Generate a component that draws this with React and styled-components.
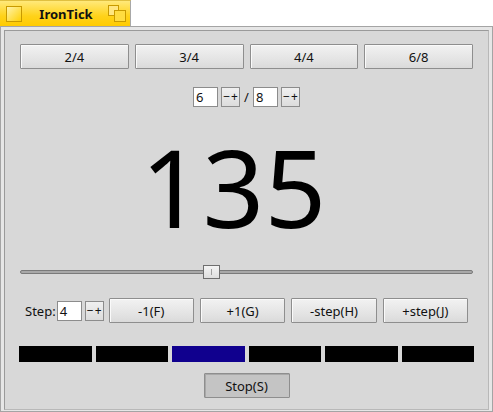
import React from 'react'
import styled, { createGlobalStyle } from 'styled-components'

const GlobalStyle = createGlobalStyle`
    html, body {
        margin: 0;
        padding: 0;
        background: #ffffff;
    }
    body {
        width: 493px;
        height: 412px;
        overflow: hidden;
        font-family: "Noto Sans", "DejaVu Sans", sans-serif;
        font-size: 13px;
        color: #111;
    }
`

const TabRow = styled.div`
    display: flex;
    height: 26px;
`

const Tab = styled.div`
    width: 131px;
    display: flex;
    align-items: center;
    justify-content: space-between;
    padding: 0 4px 0 6px;
    box-sizing: border-box;
    background: linear-gradient(#ffe97a, #ffd21a 60%, #ffcb00);
    border-right: 1px solid #a8a8a8;
    border-top: 1px solid #e0c040;
`

const TabTitle = styled.span`
    font-weight: bold;
    font-size: 13px;
    color: #111;
    margin-left: 2px;
`

const Window = styled.div`
    height: 386px;
    box-sizing: border-box;
    border: 1px solid #a4a4a4;
    background: #e6e6e6;
    padding: 2px;
`

const Panel = styled.div`
    height: 100%;
    box-sizing: border-box;
    border: 1px solid #9a9a9a;
    border-right-color: #b8b8b8;
    border-bottom-color: #b8b8b8;
    margin: 1px;
    background: #d8d8d8;
    padding: 13px 14px 0;
    display: flex;
    flex-direction: column;
`

const PresetRow = styled.div`
    display: grid;
    grid-template-columns: repeat(4, 1fr);
    gap: 6px;
    margin: 0 1px;
`

const Button = styled.button`
    height: ${p => p.$h || 25}px;
    font-family: inherit;
    font-size: 13px;
    color: #111;
    padding: 0;
    border: 1px solid #8e8e8e;
    border-radius: 1px;
    background: ${p => (p.$pressed
        ? '#c4c4c4'
        : 'linear-gradient(#f2f2f2, #e2e2e2 70%, #dadada)')};
    box-shadow: ${p => (p.$pressed
        ? 'inset 1px 1px 0 #a8a8a8'
        : 'inset 1px 1px 0 #fafafa')};
`

const SignatureRow = styled.div`
    display: flex;
    justify-content: center;
    align-items: center;
    gap: 3px;
    margin-top: 18px;
    height: 20px;
`

const NumInput = styled.div`
    width: 25px;
    height: 20px;
    box-sizing: border-box;
    border: 1px solid #8c8c8c;
    background: #fff;
    padding-left: 2px;
    line-height: 18px;
    font-size: 13px;
`

const SpinButton = styled.div`
    width: 19px;
    height: 20px;
    box-sizing: border-box;
    border: 1px solid #8c8c8c;
    background: linear-gradient(#f0f0f0, #dcdcdc);
    display: flex;
    align-items: center;
    justify-content: center;
    gap: 1px;
    font-size: 12px;
    line-height: 1;
    margin-left: ${p => p.$gap || 0}px;
`

const SpinSign = styled.span`
    display: block;
`

const Slash = styled.span`
    margin: 0 1px;
`

const Tempo = styled.div`
    height: 152px;
    display: flex;
    align-items: center;
    justify-content: center;
    padding: 8px 26px 0 0;
    box-sizing: border-box;
    font-size: 108px;
    line-height: 1;
    font-weight: 400;
    color: #000;
`

const SliderWrap = styled.div`
    position: relative;
    height: 16px;
    margin: 5px 1px 0;
`

const Track = styled.div`
    position: absolute;
    left: 0;
    right: 0;
    top: 6px;
    height: 4px;
    box-sizing: border-box;
    border: 1px solid #7a7a7a;
    border-radius: 2px;
    background: #a8a8a8;
`

const Thumb = styled.div`
    position: absolute;
    top: 1px;
    width: 17px;
    height: 14px;
    box-sizing: border-box;
    border: 1px solid #6e6e6e;
    background: linear-gradient(#f4f4f4, #dedede);
    &::after {
        content: '';
        position: absolute;
        left: 7px;
        top: 3px;
        width: 1px;
        height: 6px;
        background: #a0a0a0;
    }
`

const StepRow = styled.div`
    display: flex;
    align-items: center;
    margin: 18px 6px 0;
    height: 25px;
`

const StepLabel = styled.span`
    margin-right: 1px;
`

const StepButtons = styled.div`
    flex: 1;
    display: grid;
    grid-template-columns: repeat(4, 1fr);
    gap: 6px;
    margin-left: 5px;
`

const Beats = styled.div`
    display: flex;
    gap: 4px;
    margin-top: 23px;
    height: 16px;
`

const Beat = styled.div`
    flex: 1;
    background: ${p => (p.$active ? '#10008e' : '#000')};
`

const StopRow = styled.div`
    display: flex;
    justify-content: center;
    margin-top: 11px;
`

const TabIcon = () => (
    <svg width="16" height="16" viewBox="0 0 16 16">
        <defs>
            <linearGradient id="ti" x1="0" y1="0" x2="1" y2="1">
                <stop offset="0" stopColor="#fff4b0" />
                <stop offset="1" stopColor="#ffd000" />
            </linearGradient>
        </defs>
        <rect x="0.5" y="0.5" width="15" height="15" fill="url(#ti)" stroke="#c89a00" />
    </svg>
)

const ZoomIcon = () => (
    <svg width="18" height="17" viewBox="0 0 18 17">
        <rect x="0.5" y="0.5" width="10" height="10" fill="#ffe680" stroke="#c89a00" />
        <rect x="6.5" y="5.5" width="11" height="11" fill="#ffdc40" stroke="#c89a00" />
    </svg>
)

const Spin = ({ gap }) => (
    <SpinButton $gap={gap}>
        <SpinSign>−</SpinSign>
        <SpinSign>+</SpinSign>
    </SpinButton>
)

const presets = ['2/4', '3/4', '4/4', '6/8']
const stepButtons = ['-1(F)', '+1(G)', '-step(H)', '+step(J)']

const App = () => {
    const tempo = 135
    const min = 30
    const max = 280
    const frac = (tempo - min) / (max - min)
    const beats = [0, 1, 2, 3, 4, 5]
    const current = 2

    return (
        <>
            <GlobalStyle />
            <TabRow>
                <Tab>
                    <TabIcon />
                    <TabTitle>IronTick</TabTitle>
                    <ZoomIcon />
                </Tab>
            </TabRow>
            <Window>
                <Panel>
                    <PresetRow>
                        {presets.map(p => <Button key={p}>{p}</Button>)}
                    </PresetRow>
                    <SignatureRow>
                        <NumInput>6</NumInput>
                        <Spin />
                        <Slash>/</Slash>
                        <NumInput>8</NumInput>
                        <Spin />
                    </SignatureRow>
                    <Tempo>{tempo}</Tempo>
                    <SliderWrap>
                        <Track />
                        <Thumb style={{ left: `calc(${frac * 100}% - ${frac * 17}px)` }} />
                    </SliderWrap>
                    <StepRow>
                        <StepLabel>Step:</StepLabel>
                        <NumInput>4</NumInput>
                        <Spin gap={3} />
                        <StepButtons>
                            {stepButtons.map(b => <Button key={b}>{b}</Button>)}
                        </StepButtons>
                    </StepRow>
                    <Beats>
                        {beats.map(b => <Beat key={b} $active={b === current} />)}
                    </Beats>
                    <StopRow>
                        <Button $pressed style={{ width: 86 }}>Stop(S)</Button>
                    </StopRow>
                </Panel>
            </Window>
        </>
    )
}

export default App
